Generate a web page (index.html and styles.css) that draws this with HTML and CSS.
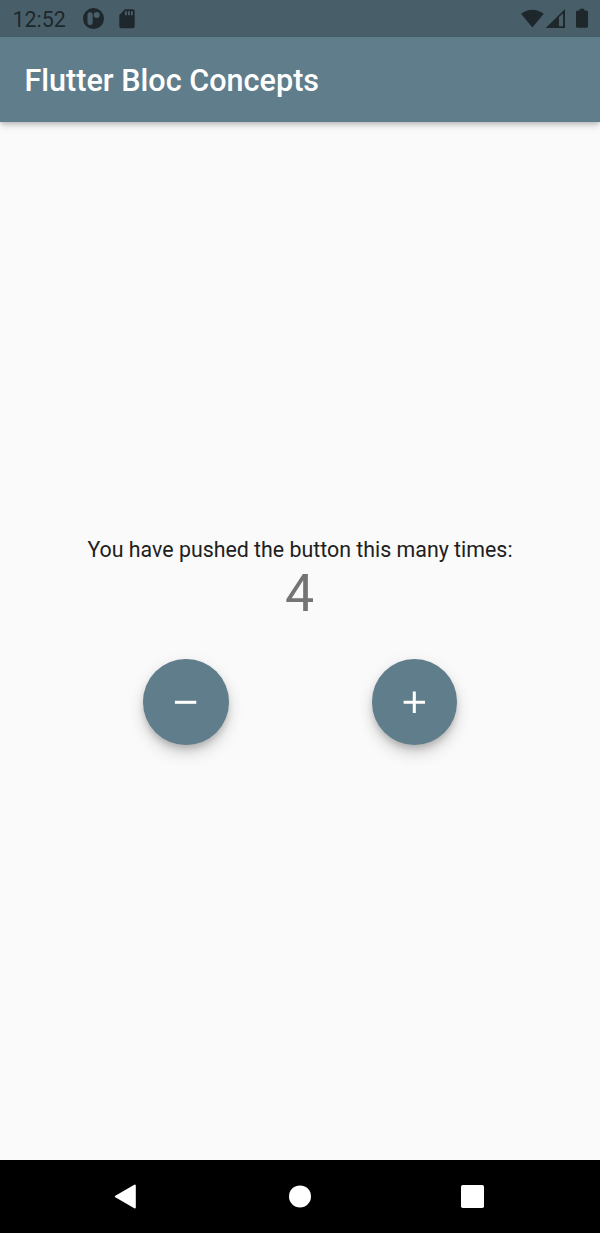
FILE: index.html
```html
<!DOCTYPE html>
<html lang="en">
<head>
<meta charset="utf-8">
<title>Flutter Bloc Concepts</title>
<link rel="stylesheet" href="styles.css">
</head>
<body>
<div class="screen">
  <div class="status-bar">
    <span class="clock">12:52</span>
    <svg class="notification" width="22" height="22" viewBox="0.5 0.4 22 22"><circle cx="11" cy="11" r="10.5" fill="#1d272c"/><rect x="5" y="4.7" width="5.2" height="12.8" rx="2.4" fill="#485f69"/><circle cx="14.2" cy="7.5" r="3" fill="#485f69"/></svg>
    <svg class="sd-card" width="16" height="20" viewBox="0 0 16 20"><path d="M6 .3h7.7a2 2 0 0 1 2 2v14.9a2 2 0 0 1-2 2H2.3a2 2 0 0 1-2-2V6z" fill="#1d272c"/><path d="M6.9 2.3v4M9.9 2.3v4M12.9 2.3v4" stroke="#485f69" stroke-width="1.9"/></svg>
    <svg class="indicators" width="69" height="22" viewBox="0 0.5 69 22" fill="#1d272c"><path d="M1 6.3Q12.4-1.9 23.8 6.3L12.4 20z"/><path fill-rule="evenodd" d="M25.8 20.5 45 1.5v19zM39 9.5v9.3h4V6z"/><path d="M59.7 1.3h4.6v1.8h2.2q1.5 0 1.5 1.5v14.2q0 1.5-1.5 1.5h-9q-1.5 0-1.5-1.5V4.6q0-1.5 1.5-1.5h2.2z"/></svg>
  </div>
  <header class="app-bar"><h1 class="title">Flutter Bloc Concepts</h1></header>
  <main class="content">
    <p class="message">You have pushed the button this many times:</p>
    <p class="count">4</p>
    <div class="actions">
      <button class="fab" aria-label="Decrement"><svg class="fab-icon" viewBox="0 0 24 24"><path d="M19.2 13h-14v-2h14z" fill="#fff"/></svg></button>
      <button class="fab" aria-label="Increment"><svg class="fab-icon" viewBox="0 0 24 24"><path d="M19 13h-6v6h-2v-6H5v-2h6V5h2v6h6z" fill="#fff"/></svg></button>
    </div>
  </main>
  <nav class="nav-bar">
    <svg width="24" height="27" viewBox="0.4 0 24 27"><path d="M2.2 13.5 21.2 2.5v22z" fill="#fff" stroke="#fff" stroke-width="2" stroke-linejoin="round"/></svg>
    <svg width="24" height="24" viewBox="0 0 24 24"><circle cx="13" cy="12.4" r="11" fill="#fff"/></svg>
    <svg width="24" height="24" viewBox="0 0 24 24"><rect x="1" y="1" width="23" height="23" rx="1.8" fill="#fff"/></svg>
  </nav>
</div>
</body>
</html>
```
FILE: styles.css
```css
body {
  margin: 0;
  font-family: Roboto, sans-serif;
}

.screen {
  display: flex;
  flex-direction: column;
  width: 600px;
  height: 1233px;
  background: #fafafa;
  overflow: hidden;
}

.status-bar {
  display: flex;
  align-items: center;
  box-sizing: border-box;
  height: 37px;
  padding: 0 11px 0 12.5px;
  background: #485f69;
  color: #1d272c;
}

.clock {
  width: 70px;
  padding-top: 1px;
  font-size: 21.4px;
  line-height: 25px;
}

.sd-card {
  margin-left: 14.5px;
}

.indicators {
  margin-left: auto;
}

.app-bar {
  display: flex;
  align-items: center;
  height: 85px;
  padding-left: 24.4px;
  background: #607d8b;
  box-shadow: 0 3px 6px -1px rgba(0, 0, 0, .2), 0 6px 8px rgba(0, 0, 0, .05), 0 1px 4px rgba(0, 0, 0, .08);
}

.title {
  margin: 0;
  padding-top: 2px;
  color: #fff;
  font-size: 30.55px;
  font-weight: 500;
  line-height: 36px;
  letter-spacing: .02px;
}

.content {
  flex: 1;
  display: flex;
  flex-direction: column;
  align-items: center;
  justify-content: center;
}

.message {
  margin: 0;
  color: #202020;
  font-size: 21.37px;
  line-height: 25px;
}

.count {
  margin: 0;
  padding: 1px 1px 0 0;
  color: #747474;
  font-size: 51.9px;
  line-height: 61px;
}

.actions {
  display: flex;
  justify-content: space-evenly;
  align-self: stretch;
  margin-top: 34.6px;
}

.fab {
  display: flex;
  align-items: center;
  justify-content: center;
  width: 85.5px;
  height: 85.5px;
  padding: 0;
  border: 0;
  border-radius: 50%;
  background: #607d8b;
  box-shadow: 0 4.6px 7.6px -1.5px rgba(0, 0, 0, .2), 0 9px 15px rgba(0, 0, 0, .14), 0 1.5px 20px rgba(0, 0, 0, .04);
}

.fab-icon {
  width: 36.6px;
  height: 36.6px;
}

.nav-bar {
  display: flex;
  align-items: center;
  justify-content: space-between;
  box-sizing: border-box;
  height: 73px;
  padding: 0 116px 1px 113.5px;
  background: #000;
}
```
